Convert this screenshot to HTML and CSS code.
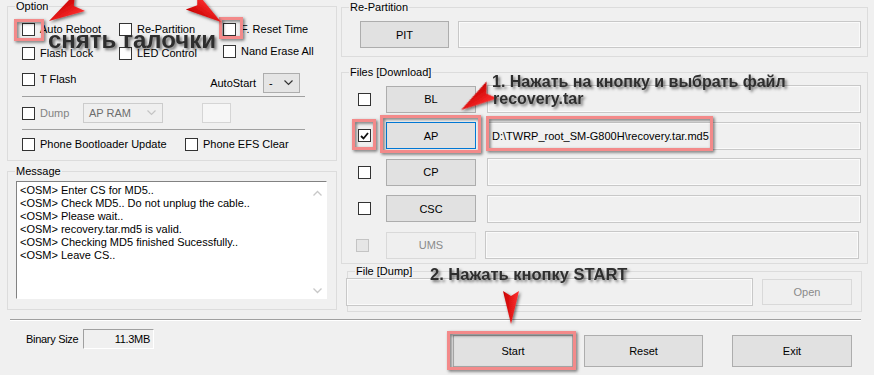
FILE: index.html
```html
<!DOCTYPE html>
<html lang="ru">

<head>
    <meta charset="UTF-8">
    <title>Odin3</title>
    <link rel="stylesheet" href="styles.css">
</head>

<body>
    <div class="odin">
        <div class="panels">
            <div class="col-left">
                <fieldset class="grp">
                    <legend>Option</legend>
                    <div class="opt-body">
                        <div class="opt-row r1">
                            <div class="chk w1"><span class="cb"></span>Auto Reboot</div>
                            <div class="chk w2"><span class="cb"></span>Re-Partition</div>
                            <div class="chk"><span class="cb"></span>F. Reset Time</div>
                        </div>
                        <div class="opt-row r2">
                            <div class="chk w1"><span class="cb"></span>Flash Lock</div>
                            <div class="chk w2"><span class="cb"></span>LED Control</div>
                            <div class="chk up"><span class="cb"></span>Nand Erase All</div>
                        </div>
                        <div class="opt-row r3">
                            <div class="chk top"><span class="cb"></span>T Flash</div>
                            <span class="autostart">AutoStart</span>
                            <div class="combo small">-<svg width="9" height="6" viewBox="0 0 9 6"><polyline points="0.5,0.5 4.5,4.5 8.5,0.5" fill="none" stroke="#333" stroke-width="1.2"/></svg></div>
                        </div>
                        <div class="etch"></div>
                        <div class="opt-row r4">
                            <div class="chk off wd"><span class="cb"></span>Dump</div>
                            <div class="combo off wide">AP RAM<svg width="9" height="6" viewBox="0 0 9 6"><polyline points="0.5,0.5 4.5,4.5 8.5,0.5" fill="none" stroke="#c4c4c4" stroke-width="1.2"/></svg></div>
                            <div class="blank"></div>
                        </div>
                        <div class="etch e2"></div>
                        <div class="opt-row r5">
                            <div class="chk wb"><span class="cb"></span>Phone Bootloader Update</div>
                            <div class="chk"><span class="cb"></span>Phone EFS Clear</div>
                        </div>
                    </div>
                </fieldset>

                <fieldset class="grp grp-msg">
                    <legend>Message</legend>
                    <div class="msg-body">
                        <div class="log">
                            <div class="log-text">
                                <p>&lt;OSM&gt; Enter CS for MD5..</p>
                                <p>&lt;OSM&gt; Check MD5.. Do not unplug the cable..</p>
                                <p>&lt;OSM&gt; Please wait..</p>
                                <p>&lt;OSM&gt; recovery.tar.md5 is valid.</p>
                                <p>&lt;OSM&gt; Checking MD5 finished Sucessfully..</p>
                                <p>&lt;OSM&gt; Leave CS..</p>
                            </div>
                            <div class="vscroll">
                                <svg width="9" height="6" viewBox="0 0 9 6"><polyline points="0.5,5.5 4.5,1.5 8.5,5.5" fill="none" stroke="#c8c8c8" stroke-width="1.3"/></svg>
                                <svg width="9" height="6" viewBox="0 0 9 6"><polyline points="0.5,0.5 4.5,4.5 8.5,0.5" fill="none" stroke="#c8c8c8" stroke-width="1.3"/></svg>
                            </div>
                        </div>
                    </div>
                </fieldset>
            </div>

            <div class="col-right">
                <fieldset class="grp">
                    <legend>Re-Partition</legend>
                    <div class="part-body">
                        <div class="btn pit">PIT</div>
                        <div class="field"></div>
                    </div>
                </fieldset>

                <fieldset class="grp grp-files">
                    <legend>Files [Download]</legend>
                    <div class="files-body">
                        <div class="file-row">
                            <span class="cb"></span>
                            <div class="btn fbtn">BL</div>
                            <div class="field"></div>
                        </div>
                        <div class="file-row">
                            <span class="cb on"><svg width="9" height="8" viewBox="0 0 9 8"><polyline points="1,4 3.5,6.5 8,1" fill="none" stroke="#111" stroke-width="1.8"/></svg></span>
                            <div class="btn fbtn focus">AP</div>
                            <div class="field">D:\TWRP_root_SM-G800H\recovery.tar.md5</div>
                        </div>
                        <div class="file-row">
                            <span class="cb"></span>
                            <div class="btn fbtn">CP</div>
                            <div class="field"></div>
                        </div>
                        <div class="file-row">
                            <span class="cb"></span>
                            <div class="btn fbtn">CSC</div>
                            <div class="field"></div>
                        </div>
                        <div class="file-row ums">
                            <span class="cb off"></span>
                            <div class="btn fbtn off">UMS</div>
                            <div class="field"></div>
                        </div>
                    </div>
                </fieldset>

                <fieldset class="grp grp-dump">
                    <legend>File [Dump]</legend>
                    <div class="dump-body">
                        <div class="field dump-field"></div>
                        <div class="btn off open">Open</div>
                    </div>
                </fieldset>
            </div>
        </div>

        <div class="hsep"></div>

        <div class="bottom">
            <div class="binary">
                <span>Binary Size</span>
                <div class="size">11.3MB</div>
            </div>
            <div class="btn big start">Start</div>
            <div class="btn big reset">Reset</div>
            <div class="btn big exit">Exit</div>
        </div>

        <!-- пометки поверх скриншота -->
        <svg class="marks" width="874" height="375" viewBox="0 0 874 375">
            <defs>
                <filter id="sh" x="-30%" y="-30%" width="160%" height="160%">
                    <feDropShadow dx="1.5" dy="1.5" stdDeviation="1.4" flood-color="#000" flood-opacity="0.55"/>
                </filter>
                <linearGradient id="red" x1="0" y1="0" x2="0" y2="1">
                    <stop offset="0" stop-color="#ff3030"/>
                    <stop offset="1" stop-color="#c80000"/>
                </linearGradient>
            </defs>
            <g fill="none" stroke="#f38a8a" stroke-width="3" filter="url(#sh)">
                <rect x="15.5" y="20.5" width="27" height="19"/>
                <rect x="220.5" y="18.5" width="21" height="19"/>
                <rect x="353.5" y="120.5" width="21" height="28"/>
                <rect x="381.5" y="116.5" width="98" height="35"/>
                <rect x="487.5" y="117.5" width="224" height="32"/>
                <rect x="448.5" y="332.5" width="126" height="36"/>
            </g>
            <g fill="url(#red)" filter="url(#sh)">
                <polygon transform="translate(49,21) rotate(149)" points="0,0 -36,-10 -29,0 -36,10"/>
                <polygon transform="translate(221,22) rotate(35)" points="0,0 -36,-10 -29,0 -36,10"/>
                <polygon transform="translate(461,110) rotate(147)" points="0,0 -37,-10 -30,0 -37,10"/>
                <polygon transform="translate(511,324) rotate(90)" points="0,0 -33,-8 -28,0 -33,8"/>
            </g>
        </svg>
        <div class="note note-big">снять галочки</div>
        <div class="note note-1">1. Нажать на кнопку и выбрать файл</div>
        <div class="note note-1b">recovery.tar</div>
        <div class="note note-2">2. Нажать кнопку START</div>
    </div>
</body>

</html>
```

FILE: styles.css
```css
* {
    box-sizing: border-box;
}

body {
    margin: 0;
    background: #f0f0f0;
    font-family: "Liberation Sans", Arial, sans-serif;
    font-size: 11px;
    color: #000;
}

.odin {
    position: relative;
    width: 874px;
    height: 375px;
    overflow: hidden;
}

.panels {
    display: flex;
    padding-left: 7px;
}

.col-left {
    width: 330px;
}

.col-right {
    width: 527px;
    margin-left: 4px;
    padding-top: 1px;
}

/* group boxes */
.grp {
    margin: 0;
    padding: 0;
    min-width: 0;
    border: 1px solid #dcdcdc;
}

.grp legend {
    margin-left: 7px;
    padding: 0 1px;
    height: 13px;
    line-height: 13px;
}

/* checkbox */
.cb {
    display: inline-flex;
    align-items: center;
    justify-content: center;
    flex: none;
    width: 13px;
    height: 13px;
    border: 1px solid #333;
    background: #fff;
}

.cb.off {
    border-color: #c4c4c4;
    background: #e6e6e6;
}

.chk {
    display: flex;
    flex: none;
    align-items: center;
    gap: 5px;
    height: 13px;
    line-height: 13px;
    white-space: nowrap;
}

.chk.off {
    color: #838383;
}

/* option group */
.opt-body {
    padding: 10px 31px 9px 14px;
}

.opt-row {
    display: flex;
    align-items: center;
    height: 13px;
}

.w1 {
    width: 97px;
}

.w2 {
    width: 104px;
}

.wd {
    width: 61px;
}

.wb {
    width: 163px;
}

.r2 {
    margin-top: 11px;
}

.r3 {
    margin-top: 13px;
    height: 20px;
}

.r4 {
    margin-top: 6px;
    height: 20px;
}

.r5 {
    margin-top: 8px;
}

.up {
    align-self: flex-start;
    margin-top: -2px;
}

.top {
    align-self: flex-start;
}

.etch {
    margin-top: 3px;
    height: 1px;
    background: #a0a0a0;
}

.etch.e2 {
    margin-top: 6px;
}

.autostart {
    margin-left: auto;
}

.combo {
    display: flex;
    flex: none;
    align-items: center;
    justify-content: space-between;
    height: 20px;
    padding: 0 6px 0 5px;
    border: 1px solid #adadad;
    background: #e5e5e5;
}

.combo.small {
    width: 37px;
    margin: 0 5px 0 7px;
}

.combo.wide {
    width: 80px;
    color: #6d6d6d;
    border-color: #cccccc;
    background: #efefef;
}

.blank {
    flex: none;
    width: 29px;
    height: 20px;
    margin-left: 39px;
    border: 1px solid #d5d5d5;
    background: #f6f6f6;
}

/* message group */
.grp-msg {
    margin-top: 4px;
}

.msg-body {
    padding: 3px 9px 10px 8px;
}

.log {
    display: flex;
    height: 118px;
    border: 1px solid;
    border-color: #828282 #fff #fff #828282;
    background: #fff;
}

.log-text {
    flex: 1;
    padding: 2px 0 0 3px;
    line-height: 13px;
}

.log-text p {
    margin: 0;
}

.vscroll {
    width: 17px;
    display: flex;
    flex-direction: column;
    justify-content: space-between;
    align-items: center;
    padding: 8px 0 4px;
    background: #fff;
}

/* buttons and fields */
.btn {
    display: flex;
    flex: none;
    align-items: center;
    justify-content: center;
    border: 1px solid #adadad;
    background: #e1e1e1;
}

.btn.focus {
    border-color: #0078d7;
}

.btn.off {
    color: #8a8a8a;
    border-color: #d9d9d9;
    background: #efefef;
}

.field {
    flex: 1;
    display: flex;
    align-items: center;
    padding-left: 4px;
    border: 1px solid #c8c8c8;
    box-shadow: inset 0 0 0 1px #fafafa;
    background: #f0f0f0;
    white-space: nowrap;
}

.part-body {
    display: flex;
    padding: 7px 6px 8px 18px;
}

.pit {
    width: 89px;
    height: 27px;
}

.part-body .field {
    margin-left: 9px;
    height: 27px;
}

.grp-files {
    margin-top: 9px;
}

.files-body {
    display: flex;
    flex-direction: column;
    gap: 8.5px;
    padding: 6px 6px 4px 16px;
}

.file-row {
    display: flex;
    align-items: center;
    height: 28px;
}

.fbtn {
    width: 90px;
    height: 27px;
    margin-left: 15px;
}

.file-row .field {
    height: 28px;
    margin-left: 11px;
}

.ums {
    margin-left: -2px;
    margin-right: 2px;
}

.ums .fbtn {
    margin-left: 17px;
}

.ums .field {
    margin-left: 9px;
}

.grp-dump {
    margin: 1px 6px 0 6px;
}

.dump-body {
    display: flex;
    align-items: center;
    padding: 0 9px 5px 0;
}

.dump-field {
    flex: none;
    width: 407px;
    height: 28px;
    margin-left: -2px;
}

.open {
    width: 90px;
    height: 26px;
    margin-left: 9px;
}

/* bottom */
.hsep {
    width: 851px;
    margin: 7px 0 0 10px;
    border-top: 1px solid #a0a0a0;
    border-bottom: 1px solid #fff;
}

.bottom {
    display: flex;
    align-items: flex-start;
}

.binary {
    display: flex;
    flex: none;
    align-items: center;
    justify-content: space-between;
    width: 128px;
    margin: 8px 0 0 26px;
    letter-spacing: -0.3px;
}

.size {
    width: 71px;
    height: 20px;
    padding-right: 3px;
    line-height: 18px;
    text-align: right;
    border: 1px solid;
    border-color: #a0a0a0 #fff #fff #a0a0a0;
}

.big {
    height: 32px;
    margin-top: 14px;
}

.start {
    width: 120px;
    margin-left: 299px;
}

.reset {
    width: 119px;
    margin-left: 11px;
}

.exit {
    width: 120px;
    margin-left: 29px;
}

/* annotations */
.marks {
    position: absolute;
    top: 0;
    left: 0;
}

.note {
    position: absolute;
    font-weight: bold;
    line-height: 1;
    color: #2e2e2e;
    white-space: nowrap;
    text-shadow: 2px 2px 3px rgba(0, 0, 0, 0.55);
}

.note-big {
    left: 48px;
    top: 28px;
    font-size: 24px;
}

.note-1 {
    left: 492px;
    top: 74px;
    font-size: 16px;
}

.note-1b {
    left: 493px;
    top: 91px;
    font-size: 16px;
}

.note-2 {
    left: 430px;
    top: 266px;
    font-size: 16.5px;
}
```
